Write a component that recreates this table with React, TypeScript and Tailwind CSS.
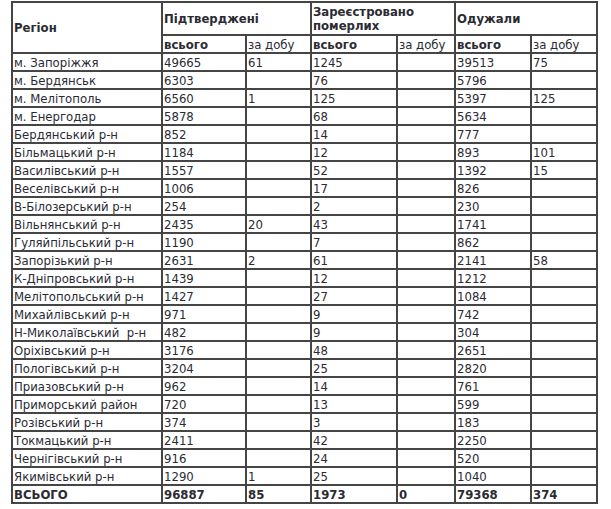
import React from "react";

const rows: [string, string, string, string, string, string, string][] = [
  ["м. Запоріжжя", "49665", "61", "1245", "", "39513", "75"],
  ["м. Бердянськ", "6303", "", "76", "", "5796", ""],
  ["м. Мелітополь", "6560", "1", "125", "", "5397", "125"],
  ["м. Енергодар", "5878", "", "68", "", "5634", ""],
  ["Бердянський р-н", "852", "", "14", "", "777", ""],
  ["Більмацький р-н", "1184", "", "12", "", "893", "101"],
  ["Василівський р-н", "1557", "", "52", "", "1392", "15"],
  ["Веселівський р-н", "1006", "", "17", "", "826", ""],
  ["В-Білозерський р-н", "254", "", "2", "", "230", ""],
  ["Вільнянський р-н", "2435", "20", "43", "", "1741", ""],
  ["Гуляйпільський р-н", "1190", "", "7", "", "862", ""],
  ["Запорізький р-н", "2631", "2", "61", "", "2141", "58"],
  ["К-Дніпровський р-н", "1439", "", "12", "", "1212", ""],
  ["Мелітопольський р-н", "1427", "", "27", "", "1084", ""],
  ["Михайлівський р-н", "971", "", "9", "", "742", ""],
  ["Н-Миколаївський\u00a0 р-н", "482", "", "9", "", "304", ""],
  ["Оріхівський р-н", "3176", "", "48", "", "2651", ""],
  ["Пологівський р-н", "3204", "", "25", "", "2820", ""],
  ["Приазовський р-н", "962", "", "14", "", "761", ""],
  ["Приморський район", "720", "", "13", "", "599", ""],
  ["Розівський р-н", "374", "", "3", "", "183", ""],
  ["Токмацький р-н", "2411", "", "42", "", "2250", ""],
  ["Чернігівський р-н", "916", "", "24", "", "520", ""],
  ["Якимівський р-н", "1290", "1", "25", "", "1040", ""],
];

const total = ["ВСЬОГО", "96887", "85", "1973", "0", "79368", "374"];

const cell = "border-2 border-[#454545] px-px py-0 align-middle text-left whitespace-nowrap";

export default function App() {
  return (
    <div className="w-[611px] h-[509px] bg-white pt-[1px] pl-[11px] text-[#2b2b33] text-[13px] leading-[15px]" style={{ fontFamily: '"DejaVu Sans Condensed", "DejaVu Sans", sans-serif' }}>
      <table className="table-fixed border-collapse w-[585px]">
        <colgroup>
          <col className="w-[150px]" />
          <col className="w-[84px]" />
          <col className="w-[65px]" />
          <col className="w-[86px]" />
          <col className="w-[58px]" />
          <col className="w-[76px]" />
          <col className="w-[66px]" />
        </colgroup>
        <thead>
          <tr className="h-[33px]">
            <th rowSpan={2} className={cell + " font-bold"}>Регіон</th>
            <th colSpan={2} className={cell + " font-bold"}>Підтверджені</th>
            <th colSpan={2} className={"border-2 border-[#454545] px-px py-0 align-middle text-left font-bold leading-[14px]"}>Зареєстровано померлих</th>
            <th colSpan={2} className={cell + " font-bold"}>Одужали</th>
          </tr>
          <tr className="h-[18px]">
            <th className={cell + " font-bold"}>всього</th>
            <th className={cell + " font-normal"}>за добу</th>
            <th className={cell + " font-bold"}>всього</th>
            <th className={cell + " font-normal"}>за добу</th>
            <th className={cell + " font-bold"}>всього</th>
            <th className={cell + " font-normal"}>за добу</th>
          </tr>
        </thead>
        <tbody>
          {rows.map((r, i) => (
            <tr key={i} className="h-[18px]">
              {r.map((c, j) => (
                <td key={j} className={cell}>{c}</td>
              ))}
            </tr>
          ))}
          <tr className="h-[18px]">
            {total.map((c, j) => (
              <td key={j} className={cell + " font-bold"}>{c}</td>
            ))}
          </tr>
        </tbody>
      </table>
    </div>
  );
}
